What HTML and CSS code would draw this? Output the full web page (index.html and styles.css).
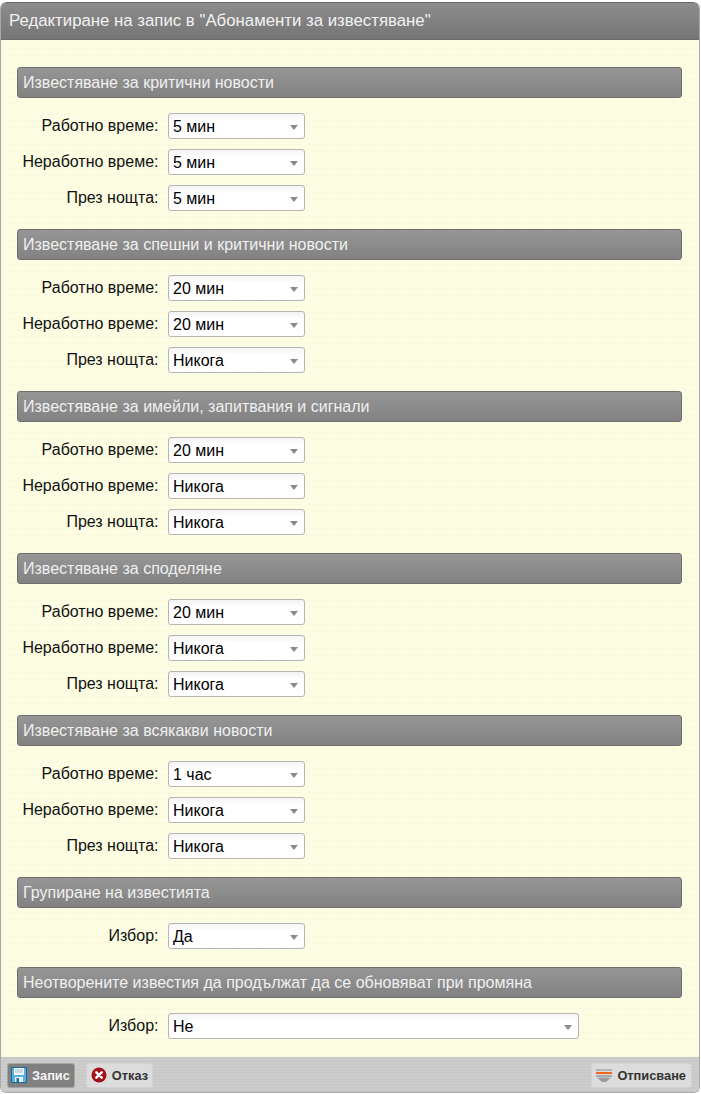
FILE: index.html
```html
<!DOCTYPE html>
<html lang="bg">
<head>
<meta charset="utf-8">
<title>Редактиране на запис</title>
<link rel="stylesheet" href="styles.css">
</head>
<body>
<div class="window">
  <header class="titlebar">Редактиране на запис в "Абонаменти за известяване"</header>
  <main class="content">
    <section class="group">
      <h2 class="group-title">Известяване за критични новости</h2>
      <div class="row"><span class="label">Работно време:</span><div class="select"><span>5 мин</span><i class="arrow"></i></div></div>
      <div class="row"><span class="label">Неработно време:</span><div class="select"><span>5 мин</span><i class="arrow"></i></div></div>
      <div class="row"><span class="label">През нощта:</span><div class="select"><span>5 мин</span><i class="arrow"></i></div></div>
    </section>
    <section class="group">
      <h2 class="group-title">Известяване за спешни и критични новости</h2>
      <div class="row"><span class="label">Работно време:</span><div class="select"><span>20 мин</span><i class="arrow"></i></div></div>
      <div class="row"><span class="label">Неработно време:</span><div class="select"><span>20 мин</span><i class="arrow"></i></div></div>
      <div class="row"><span class="label">През нощта:</span><div class="select"><span>Никога</span><i class="arrow"></i></div></div>
    </section>
    <section class="group">
      <h2 class="group-title">Известяване за имейли, запитвания и сигнали</h2>
      <div class="row"><span class="label">Работно време:</span><div class="select"><span>20 мин</span><i class="arrow"></i></div></div>
      <div class="row"><span class="label">Неработно време:</span><div class="select"><span>Никога</span><i class="arrow"></i></div></div>
      <div class="row"><span class="label">През нощта:</span><div class="select"><span>Никога</span><i class="arrow"></i></div></div>
    </section>
    <section class="group">
      <h2 class="group-title">Известяване за споделяне</h2>
      <div class="row"><span class="label">Работно време:</span><div class="select"><span>20 мин</span><i class="arrow"></i></div></div>
      <div class="row"><span class="label">Неработно време:</span><div class="select"><span>Никога</span><i class="arrow"></i></div></div>
      <div class="row"><span class="label">През нощта:</span><div class="select"><span>Никога</span><i class="arrow"></i></div></div>
    </section>
    <section class="group">
      <h2 class="group-title">Известяване за всякакви новости</h2>
      <div class="row"><span class="label">Работно време:</span><div class="select"><span>1 час</span><i class="arrow"></i></div></div>
      <div class="row"><span class="label">Неработно време:</span><div class="select"><span>Никога</span><i class="arrow"></i></div></div>
      <div class="row"><span class="label">През нощта:</span><div class="select"><span>Никога</span><i class="arrow"></i></div></div>
    </section>
    <section class="group">
      <h2 class="group-title">Групиране на известията</h2>
      <div class="row"><span class="label">Избор:</span><div class="select"><span>Да</span><i class="arrow"></i></div></div>
    </section>
    <section class="group">
      <h2 class="group-title">Неотворените известия да продължат да се обновяват при промяна</h2>
      <div class="row"><span class="label">Избор:</span><div class="select select-wide"><span>Не</span><i class="arrow"></i></div></div>
    </section>
  </main>
  <footer class="toolbar">
    <button class="btn btn-primary" type="button">
      <svg class="icon" viewBox="0 0 16 16" width="16" height="16" aria-hidden="true">
        <path d="M0.500 0.500h15v15h-15z" fill="#58aee6" stroke="#17699f"/>
        <path d="M3 1h10v7H3z" fill="#f6f9fb"/>
        <path d="M4 3h8M4 5h8" stroke="#a5b9c6"/>
        <path d="M4 10h8v5H4z" fill="#f2f5f7"/>
        <path d="M5.500 11h2.500v4H5.500z" fill="#1f6a9e"/>
      </svg>
      Запис
    </button>
    <button class="btn" type="button">
      <svg class="icon" viewBox="0 0 16 16" width="16" height="16" aria-hidden="true">
        <circle cx="8" cy="8" r="7.500" fill="#a3131b"/>
        <path d="M5.300 5.300l5.400 5.400M10.700 5.300l-5.400 5.400" stroke="#fff" stroke-width="2.400" stroke-linecap="round"/>
      </svg>
      Отказ
    </button>
    <button class="btn btn-end" type="button">
      <svg class="icon" viewBox="0 0 16 16" width="16" height="16" aria-hidden="true">
        <path d="M0 2h16v2H0z" fill="#b5b5b5"/>
        <path d="M0 5h16v2H0z" fill="#f0641c"/>
        <path d="M0 8h16v2H0z" fill="#a9a9a9"/>
        <path d="M1 10.500h14L10 15H6z" fill="#9c9c9c"/>
      </svg>
      Отписване
    </button>
  </footer>
</div>
</body>
</html>
```
FILE: styles.css
```css
* { box-sizing: border-box; }
html, body { margin: 0; padding: 0; height: 100%; overflow: hidden; background: #fff; }
body { font-family: "Liberation Sans", Arial, sans-serif; font-size: 16px; color: #111; }

.window {
  width: 700px;
  height: 1091px;
  margin-top: 2px;
  display: flex;
  flex-direction: column;
  border: 1px solid #a9a9a9;
  border-top: 0;
  border-radius: 6px;
  overflow: hidden;
}

.titlebar {
  flex: 0 0 38px;
  padding: 0 8px;
  line-height: 35px;
  font-size: 16.8px;
  color: #f2f2f2;
  background: linear-gradient(#8d8d8d, #757575);
  border-top: 1px solid #666;
  border-bottom: 1px solid #6a6a6a;
  border-radius: 6px 6px 0 0;
}

.content {
  flex: 1 1 auto;
  padding: 27px 16px 0;
  background-color: #fdfde3;
  background-image:
    repeating-linear-gradient(0deg, rgba(190,190,150,.06) 0 1px, transparent 1px 6px),
    repeating-linear-gradient(90deg, rgba(190,190,150,.03) 0 1px, transparent 1px 12px);
}

.group { margin-bottom: 18px; }

.group-title {
  margin: 0 0 15px;
  width: 665px;
  height: 31px;
  padding: 0 5px;
  font-size: 16px;
  font-weight: 400;
  line-height: 29px;
  color: #f0f0f0;
  background: linear-gradient(#969696, #828282);
  border: 1px solid #6e6e6e;
  border-radius: 3px;
}

.row {
  display: flex;
  align-items: center;
  gap: 9.5px;
  margin-bottom: 10px;
}
.row:last-child { margin-bottom: 0; }

.label {
  flex: 0 0 141.5px;
  text-align: right;
  font-size: 16px;
  color: #111;
  white-space: nowrap;
}

.select {
  width: 137px;
  height: 26px;
  display: flex;
  align-items: center;
  justify-content: space-between;
  padding: 1px 6px 0 4px;
  font-size: 16px;
  color: #000;
  background: linear-gradient(#f4f4f4, #fff 30%, #fff);
  border: 1px solid #b5b5b5;
  border-radius: 3px;
}
.select-wide { width: 411px; }

.arrow {
  width: 0;
  height: 0;
  margin-top: 2px;
  border-left: 4.500px solid transparent;
  border-right: 4.500px solid transparent;
  border-top: 5px solid #8a8a8a;
}

.toolbar {
  flex: 0 0 36px;
  display: flex;
  align-items: center;
  gap: 11px;
  padding: 0 7px 0 6px;
  background-color: #c9c9c9;
  background-image: repeating-linear-gradient(0deg, rgba(255,255,255,.10) 0 1px, transparent 1px 3px);
}

.btn {
  height: 25px;
  display: inline-flex;
  align-items: center;
  gap: 5px;
  padding: 0 4px;
  font-family: "Liberation Sans", Arial, sans-serif;
  font-size: 12.8px;
  font-weight: 700;
  color: #333;
  background: #dcdcdc;
  border: 1px solid #d2d2d2;
  border-radius: 3px;
}
.btn-primary {
  padding-left: 3px;
  color: #f4f4f4;
  background: #808080;
  border-color: #a5a5a5;
}
.btn-end { margin-left: auto; padding-right: 5px; }
.icon { flex: none; display: block; }
```
